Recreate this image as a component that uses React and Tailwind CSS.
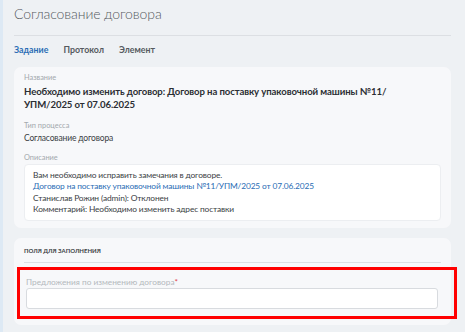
export default function App() {
  return (
    <div
      className="w-[465px] h-[332px] overflow-hidden flex bg-[#eef1f4]"
      style={{ fontFamily: 'Lato, "Noto Sans", sans-serif' }}
    >
      <div className="w-[3px] shrink-0 bg-[#dde9f4]" />
      <div className="flex-1 pl-[11px] pr-[14px]">
        {/* Header */}
        <h1 className="h-[36px] pt-[3px] text-[14px] leading-[22px] tracking-[-0.1px] font-light text-[#555a60] border-b border-[#dcdfe3]">
          Согласование договора
        </h1>
        <nav className="flex gap-[15px] h-[31px] pt-[7px] text-[8.8px] leading-[14px] font-bold text-[#555a60]">
          <span className="text-[#2a6db5]">Задание</span>
          <span>Протокол</span>
          <span>Элемент</span>
        </nav>

        {/* Task card */}
        <section className="rounded-[7px] bg-[#f7f8fa] px-[10px] pt-[5px] pb-[7px]">
          <div className="text-[7.4px] leading-[12px] text-[#a3a8ad]">Название</div>
          <div className="mt-[1px] text-[9.6px] leading-[13px] tracking-[-0.1px] font-bold text-[#2b2e33]">
            Необходимо изменить договор: Договор на поставку упаковочной машины №11/
            <br />
            УПМ/2025 от 07.06.2025
          </div>
          <div className="mt-[9px] text-[7.4px] leading-[12px] text-[#a3a8ad]">Тип процесса</div>
          <div className="text-[8.5px] leading-[12px] tracking-[-0.15px] text-[#3a3e44]">Согласование договора</div>
          <div className="mt-[8px] text-[7.4px] leading-[12px] text-[#a3a8ad]">Описание</div>
          <div className="rounded-[4px] bg-white border border-[#eceef1] px-[8px] py-[5px] text-[8.4px] leading-[11.3px] tracking-[-0.15px] text-[#3a3e44]">
            <div>Вам необходимо исправить замечания в договоре.</div>
            <div className="text-[#2a6db5]">Договор на поставку упаковочной машины №11/УПМ/2025 от 07.06.2025</div>
            <div>Станислав Рожин (admin): Отклонен</div>
            <div>Комментарий: Необходимо изменить адрес поставки</div>
          </div>
        </section>

        {/* Fields card */}
        <section className="mt-[10px] rounded-[7px] bg-[#f7f8fa] px-[10px] pt-[8px] pb-[6px]">
          <div className="h-[17px] text-[6px] leading-[10px] font-bold uppercase text-[#3a3e44] border-b border-[#dcdfe3]">
            Поля для заполнения
          </div>
          <div className="relative mt-[4px] pt-[9px] pb-[10px]">
            <div className="pl-[2px] text-[8.3px] leading-[12px] text-[#b4b8bd]">
              Предложения по изменению договора<span className="text-[#e0474c]">*</span>
            </div>
            <div className="ml-[2px] mr-[3px] h-[21px] rounded-[3px] bg-white border border-[#d8dbdf]" />
            <div className="absolute left-[-7px] right-[-16px] top-0 bottom-0 border-[3px] border-[#ff0000]" />
          </div>
        </section>
      </div>
    </div>
  );
}
